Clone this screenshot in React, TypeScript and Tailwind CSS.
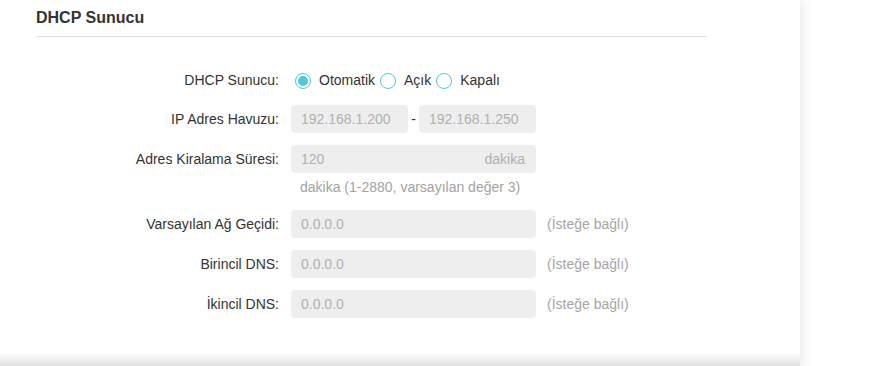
import React from 'react'

const font = { fontFamily: '"Liberation Sans", Arial, sans-serif' }

function Radio({ checked, label }: { checked?: boolean; label: string }) {
  return (
    <label className="flex items-center mr-[5px] cursor-pointer">
      <span className="w-4 h-4 rounded-full border border-[#4acbd6] flex items-center justify-center flex-shrink-0">
        {checked && <span className="w-[10px] h-[10px] rounded-full bg-[#4acbd6]" />}
      </span>
      <span className="ml-2 text-[14px] text-[#333]">{label}</span>
    </label>
  )
}

function Field({ value, suffix, className = '' }: { value: string; suffix?: string; className?: string }) {
  return (
    <div
      className={`h-[28px] rounded-[4px] bg-[#eeeeee] flex items-center justify-between pl-[10px] pr-[11px] text-[14px] text-[#b0b0b0] ${className}`}
    >
      <span>{value}</span>
      {suffix && <span>{suffix}</span>}
    </div>
  )
}

function Row({ label, children, className = '' }: { label: string; children: React.ReactNode; className?: string }) {
  return (
    <div className={`flex items-center h-[40px] ${className}`}>
      <div className="w-[244px] text-right text-[14px] text-[#333] pr-px">{label}</div>
      <div className="ml-[11px] flex items-center">{children}</div>
    </div>
  )
}

const optional = [
  { label: 'Varsayılan Ağ Geçidi:', value: '0.0.0.0' },
  { label: 'Birincil DNS:', value: '0.0.0.0' },
  { label: 'İkincil DNS:', value: '0.0.0.0' },
]

export default function App() {
  return (
    <div className="w-[881px] h-[366px] bg-white overflow-hidden flex" style={font}>
      <div className="w-[800px] h-[366px] bg-white flex flex-col shadow-[0_0_12px_rgba(0,0,0,0.13)] relative z-10">
        {/* Header */}
        <div className="px-9">
          <div className="w-[670px] h-[37px] border-b border-[#dddddd] pt-[8px]">
            <h2 className="text-[16px] leading-[20px] font-bold text-[#333]">DHCP Sunucu</h2>
          </div>
        </div>

        {/* Form */}
        <div className="px-9 pt-[22px]">
          <Row label="DHCP Sunucu:" className="pt-[3px] pb-0 h-[40px]">
            <div className="ml-1 flex items-center">
              <Radio checked label="Otomatik" />
              <Radio label="Açık" />
              <Radio label="Kapalı" />
            </div>
          </Row>
          <Row label="IP Adres Havuzu:">
            <Field value="192.168.1.200" className="w-[117px]" />
            <span className="w-[11px] text-center text-[14px] text-[#333]">-</span>
            <Field value="192.168.1.250" className="w-[117px]" />
          </Row>
          <Row label="Adres Kiralama Süresi:">
            <Field value="120" suffix="dakika" className="w-[245px]" />
          </Row>
          <div className="pl-[264px] h-[26px] -mt-px text-[14px] leading-[18px] text-[#a3a3a3]">
            dakika (1-2880, varsayılan değer 3)
          </div>
          {optional.map((f) => (
            <Row key={f.label} label={f.label}>
              <Field value={f.value} className="w-[245px]" />
              <span className="ml-[11px] text-[14px] text-[#a6a6a6]">(İsteğe bağlı)</span>
            </Row>
          ))}
        </div>

        <div className="mt-auto h-[14px] bg-gradient-to-b from-white to-[#e0e0e0]" />
      </div>
    </div>
  )
}
